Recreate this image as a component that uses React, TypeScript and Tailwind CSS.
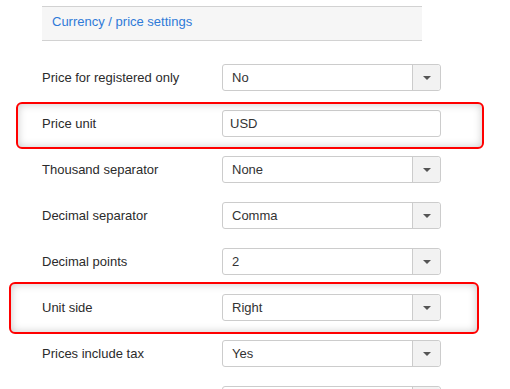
import React from 'react';

const rows: { label: string; value: string; type: 'select' | 'input' }[] = [
  { label: 'Price for registered only', value: 'No', type: 'select' },
  { label: 'Price unit', value: 'USD', type: 'input' },
  { label: 'Thousand separator', value: 'None', type: 'select' },
  { label: 'Decimal separator', value: 'Comma', type: 'select' },
  { label: 'Decimal points', value: '2', type: 'select' },
  { label: 'Unit side', value: 'Right', type: 'select' },
  { label: 'Prices include tax', value: 'Yes', type: 'select' },
  { label: '', value: '', type: 'select' },
];

const Field: React.FC<{ value: string; type: 'select' | 'input' }> = ({ value, type }) => {
  if (type === 'input') {
    return (
      <div className="w-[219px] h-[27px] border border-[#ccc] rounded-[3px] bg-white flex items-center px-[7px] text-[13px] text-[#333]">
        {value}
      </div>
    );
  }
  return (
    <div className="w-[219px] h-[27px] border border-[#ccc] rounded-[3px] bg-white flex">
      <div className="flex-1 flex items-center pl-[9px] text-[13px] text-[#333]">{value}</div>
      <div className="w-[28px] border-l border-[#ccc] bg-[#f2f2f2] rounded-r-[3px] flex items-center justify-center">
        <svg width="8" height="4" viewBox="0 0 8 4">
          <path d="M0 0 L8 0 L4 4 Z" fill="#555" />
        </svg>
      </div>
    </div>
  );
};

export default function App() {
  return (
    <div
      className="relative w-[510px] h-[389px] overflow-hidden bg-white"
      style={{ fontFamily: '"Liberation Sans", Arial, sans-serif' }}
    >
      <div className="pl-[42px] pt-[6px]">
        <div className="w-[380px] h-[35px] bg-[#f6f6f6] border-t border-b border-[#d2d2d2] flex items-center pl-[10px] pb-[3px] text-[13px] text-[#2f7ad8]">
          Currency / price settings
        </div>
        <div className="mt-[23px] flex flex-col gap-[19px]">
          {rows.map((r, i) => (
            <div key={i} className="flex items-center h-[27px]">
              <div className="w-[180px] text-[13px] text-[#2b2b2b]">{r.label}</div>
              <Field value={r.value} type={r.type} />
            </div>
          ))}
        </div>
      </div>

      <div className="absolute left-[16px] top-[102px] w-[468px] h-[47px] border-2 border-[#f00] rounded-[6px] shadow-[inset_0_0_8px_rgba(0,0,0,0.22)]" />
      <div className="absolute left-[9px] top-[282px] w-[470px] h-[52px] border-2 border-[#f00] rounded-[6px] shadow-[inset_0_0_8px_rgba(0,0,0,0.22)]" />
    </div>
  );
}
